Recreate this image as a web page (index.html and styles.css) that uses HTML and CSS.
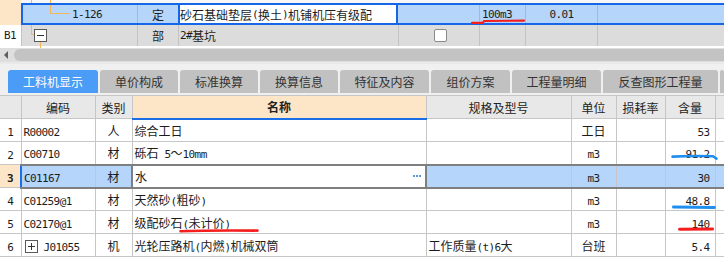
FILE: index.html
```html
<!DOCTYPE html>
<html lang="zh-CN">
<head>
<meta charset="utf-8">
<title>工料机显示</title>
<link rel="stylesheet" href="styles.css">
</head>
<body>
<div class="top">
  <div class="trow stub">
    <div class="c c-idx beige"></div>
    <div class="c stub-rest"><i class="tl s-v1"></i><i class="tl s-v2"></i></div>
  </div>
  <div class="trow r1">
    <div class="c r1-idx beige"></div>
    <div class="selbox">
      <div class="c t1-code"><i class="tl r1-v"></i><i class="tl r1-h"></i><span class="a">1-126</span></div>
      <div class="c t1-type">定</div>
      <div class="c t1-name">砂石基础垫层<span class="a">(</span>换土<span class="a">)</span>机铺机压有级配</div>
      <div class="c t1-c4"></div>
      <div class="c t1-c5"><span class="a">100m3</span>
        <svg class="mark m-top" width="56" height="7" viewBox="0 0 56 7"><path d="M1 4.8 L12 4.8 L13 3 L53 2.6" fill="none" stroke="#f51d1d" stroke-width="2.2" stroke-linecap="round" stroke-linejoin="round"/></svg>
      </div>
      <div class="c t1-c6"><span class="a">0.01</span></div>
      <div class="c t-rest"></div>
    </div>
  </div>
  <div class="trow r2">
    <div class="c t2-idx"><span class="a">B1</span></div>
    <div class="c t2-code"><i class="tl r2-v"></i><i class="tl r2-h"></i><i class="tl r2-v2"></i><span class="box minus"></span></div>
    <div class="c t2-type">部</div>
    <div class="c t2-name"><span class="a">2#</span>基坑</div>
    <div class="c t2-c4"><span class="check"></span></div>
    <div class="c t2-c5"></div>
    <div class="c t2-c6"></div>
    <div class="c t-rest"></div>
  </div>
</div>

<div class="hscroll">
  <span class="arrow"></span>
  <span class="thumb"></span>
</div>

<div class="tabbar">
  <div class="tab active w90">工料机显示</div>
  <div class="tab w78">单价构成</div>
  <div class="tab w78">标准换算</div>
  <div class="tab w78">换算信息</div>
  <div class="tab w89">特征及内容</div>
  <div class="tab w79">组价方案</div>
  <div class="tab w89">工程量明细</div>
  <div class="tab w115">反查图形工程量</div>
  <div class="tab wrest"></div>
</div>

<table class="grid">
  <colgroup>
    <col class="k0"><col class="k1"><col class="k2"><col class="k3"><col class="k4"><col class="k5"><col class="k6"><col class="k7"><col class="k8">
  </colgroup>
  <thead>
    <tr>
      <th></th>
      <th>编码</th>
      <th>类别</th>
      <th class="h-name">名称</th>
      <th>规格及型号</th>
      <th>单位</th>
      <th>损耗率</th>
      <th>含量</th>
      <th></th>
    </tr>
  </thead>
  <tbody>
    <tr>
      <td class="idx"><span class="a">1</span></td>
      <td><span class="a">R00002</span></td>
      <td class="ctr">人</td>
      <td>综合工日</td>
      <td></td>
      <td class="ctr">工日</td>
      <td></td>
      <td class="num"><span class="a">53</span></td>
      <td></td>
    </tr>
    <tr>
      <td class="idx"><span class="a">2</span></td>
      <td><span class="a">C00710</span></td>
      <td class="ctr">材</td>
      <td>砾石<span class="a"> 5</span>～<span class="a">10mm</span></td>
      <td></td>
      <td class="ctr"><span class="a">m3</span></td>
      <td></td>
      <td class="num"><span class="a">91.2</span>
        <svg class="mark m-blue1" width="48" height="8" viewBox="0 0 48 8"><path d="M1.5 2.6 Q20 1.6 42 2.2 L45.5 4.6" fill="none" stroke="#1e8ff0" stroke-width="2.6" stroke-linecap="round" stroke-linejoin="round"/></svg>
      </td>
      <td></td>
    </tr>
    <tr class="sel">
      <td class="idx"><span class="a">3</span></td>
      <td class="code"><span class="a">C01167</span></td>
      <td class="ctr">材</td>
      <td class="edit">水<span class="dots"><i></i><i></i><i></i></span></td>
      <td></td>
      <td class="ctr"><span class="a">m3</span></td>
      <td></td>
      <td class="num"><span class="a">30</span></td>
      <td></td>
    </tr>
    <tr>
      <td class="idx"><span class="a">4</span></td>
      <td><span class="a">C01259@1</span></td>
      <td class="ctr">材</td>
      <td>天然砂<span class="a">(</span>粗砂<span class="a">)</span></td>
      <td></td>
      <td class="ctr"><span class="a">m3</span></td>
      <td></td>
      <td class="num"><span class="a">48.8</span>
        <svg class="mark m-blue2" width="46" height="7" viewBox="0 0 46 7"><path d="M1.5 3 L42.5 3.4" fill="none" stroke="#1e8ff0" stroke-width="3" stroke-linecap="round"/></svg>
      </td>
      <td></td>
    </tr>
    <tr>
      <td class="idx"><span class="a">5</span></td>
      <td><span class="a">C02170@1</span></td>
      <td class="ctr">材</td>
      <td>级配砂石<span class="a">(</span>未计价<span class="a">)</span>
        <svg class="mark m-red2" width="82" height="6" viewBox="0 0 82 6"><path d="M1.5 3.2 Q30 2.2 78.5 2.6" fill="none" stroke="#f51d1d" stroke-width="2.6" stroke-linecap="round"/></svg>
      </td>
      <td></td>
      <td class="ctr"><span class="a">m3</span></td>
      <td></td>
      <td class="num"><span class="a">140</span>
        <svg class="mark m-red1" width="38" height="7" viewBox="0 0 38 7"><path d="M1.5 3.2 L34.5 3" fill="none" stroke="#f51d1d" stroke-width="3" stroke-linecap="round"/></svg>
      </td>
      <td></td>
    </tr>
    <tr>
      <td class="idx"><span class="a">6</span></td>
      <td><span class="box plus"></span><span class="a">J01055</span></td>
      <td class="ctr">机</td>
      <td>光轮压路机<span class="a">(</span>内燃<span class="a">)</span>机械双筒</td>
      <td>工作质量<span class="a">(t)6</span>大</td>
      <td class="ctr">台班</td>
      <td></td>
      <td class="num"><span class="a">5.4</span></td>
      <td></td>
    </tr>
  </tbody>
</table>
</body>
</html>
```
FILE: styles.css
```css
* {
  box-sizing: border-box;
  margin: 0;
  padding: 0;
}

html, body {
  background: #ffffff;
}

body {
  margin: 0;
  width: 724px;
  overflow: hidden;
  font-family: "Noto Sans CJK SC", "Noto Sans", sans-serif;
  font-size: 12px;
  color: #1c1c1c;
}

.a {
  font-family: "DejaVu Sans Mono", "Liberation Mono", monospace;
  font-size: 11px;
  letter-spacing: -0.6px;
}

/* ---------- top grid ---------- */
.trow {
  display: flex;
}

.c {
  position: relative;
  flex: none;
  display: flex;
  align-items: center;
  white-space: nowrap;
}

.beige {
  background: #fde5c7;
}

.stub {
  height: 3px;
}

.stub .c-idx {
  width: 21px;
}

.stub-rest {
  flex: 1;
  background: #f7f7f7;
}

.tl {
  position: absolute;
  display: block;
  background: #f6b65c;
}

.s-v1 { left: 10px; top: 0; width: 1px; height: 3px; }
.s-v2 { left: 29px; top: 0; width: 1px; height: 3px; }

.r1 {
  height: 22px;
}

.r1-idx {
  width: 21px;
}

.selbox {
  flex: 1;
  display: flex;
  height: 22px;
  border: 2px solid #1566e8;
  border-right: none;
  background: #b5d5fb;
}

.selbox .c {
  height: 18px;
}

.t1-code {
  width: 115px;
  border-right: 1px solid #a9b9cc;
  padding-left: 49px;
}

.r1-v { left: 27px; top: 0; width: 1px; height: 9px; }
.r1-h { left: 27px; top: 8px; width: 20px; height: 1px; }

.t1-type {
  width: 40px;
  justify-content: center;
}

.t1-name {
  width: 220px;
  background: #ffffff;
  border-left: 2px solid #1566e8;
  border-right: 2px solid #1566e8;
  padding-left: 0;
}

.t1-c4 {
  width: 82px;
  border-right: 1px solid #a9b9cc;
}

.t1-c5 {
  width: 46px;
  border-right: 1px solid #a9b9cc;
  padding-left: 2px;
}

.t1-c6 {
  width: 72px;
  border-right: 1px solid #a9b9cc;
  justify-content: center;
}

.t-rest {
  flex: 1;
}

.mark {
  position: absolute;
  display: block;
  overflow: visible;
}

.m-top {
  left: -9px;
  top: 13px;
}

.r2 {
  height: 21px;
  background: #dcdcdc;
}

.r2 .c {
  height: 21px;
  border-right: 1px solid #c3c3c3;
}

.t2-idx {
  width: 22px;
  background: #ffffff;
  padding-left: 4px;
}

.t2-code {
  width: 116px;
}

.r2-v { left: 9px; top: 0; width: 1px; height: 10px; }
.r2-h { left: 9px; top: 9px; width: 4px; height: 1px; }
.r2-v2 { left: 18px; top: 17px; width: 1px; height: 6px; }

.box {
  display: inline-block;
  position: relative;
  width: 13px;
  height: 13px;
  border: 1px solid #5a5a5a;
  background: #ffffff;
  flex: none;
}

.box::before {
  content: "";
  position: absolute;
  left: 2px;
  top: 5px;
  width: 7px;
  height: 1px;
  background: #333333;
}

.plus::after {
  content: "";
  position: absolute;
  left: 5px;
  top: 2px;
  width: 1px;
  height: 7px;
  background: #333333;
}

.t2-code .minus {
  margin-left: 12px;
  margin-top: -1px;
}

.t2-type {
  width: 41px;
  justify-content: center;
}

.t2-name {
  width: 220px;
  padding-left: 1px;
}

.t2-c4 {
  width: 81px;
  justify-content: center;
}

.check {
  display: block;
  width: 13px;
  height: 13px;
  border: 1px solid #8a8a8a;
  border-radius: 2px;
  background: #ffffff;
  margin-left: 2px;
}

.t2-c5 { width: 46px; }
.t2-c6 { width: 72px; }

.r2 .t-rest {
  border-right: none;
}

/* ---------- scrollbar ---------- */
.hscroll {
  display: flex;
  align-items: center;
  height: 18px;
  border-top: 2px solid #ffffff;
  border-bottom: 2px solid #e9e9e9;
  background: #dedede;
  padding-left: 4px;
}

.arrow {
  display: block;
  width: 0;
  height: 0;
  border-top: 4px solid transparent;
  border-bottom: 4px solid transparent;
  border-right: 4px solid #5f5f5f;
}

.thumb {
  display: block;
  flex: 1;
  height: 12px;
  margin-left: 6px;
  background: #c3c3c3;
  border-radius: 6px 0 0 6px;
}

/* ---------- tabs ---------- */
.tabbar {
  display: flex;
  gap: 2px;
  background: #f0f0f0;
  padding: 6px 0 2px 8px;
}

.tab {
  flex: none;
  height: 23px;
  display: flex;
  align-items: center;
  justify-content: center;
  background: #c1c1c1;
  color: #333333;
  border-radius: 3px 3px 0 0;
  font-size: 12px;
  white-space: nowrap;
}

.tab.active {
  background: #4a9cf6;
  color: #ffffff;
}

.w90 { width: 90px; }
.w78 { width: 78px; }
.w79 { width: 79px; }
.w89 { width: 89px; }
.w115 { width: 115px; }
.wrest { flex: 1; }

/* ---------- main grid ---------- */
.grid {
  border-collapse: collapse;
  table-layout: fixed;
  width: 724px;
}

.k0 { width: 21px; }
.k1 { width: 74px; }
.k2 { width: 37px; }
.k3 { width: 294px; }
.k4 { width: 145px; }
.k5 { width: 45px; }
.k6 { width: 49px; }
.k7 { width: 50px; }
.k8 { width: 9px; }

.grid th,
.grid td {
  position: relative;
  border: 1px solid #c6c6c6;
  padding: 0 2px;
  white-space: nowrap;
  text-align: left;
  vertical-align: middle;
  font-weight: normal;
}

.grid th:first-child,
.grid td:first-child {
  border-left: none;
}

.grid thead tr {
  height: 23px;
}

.grid th {
  background: #e8e8e8;
  text-align: center;
  color: #222222;
}

.grid th.h-name {
  background: #fde5c7;
  font-weight: bold;
  border-bottom: 2px solid #1a6fe8;
}

.grid tbody tr {
  height: 23px;
}

.grid td.idx {
  text-align: center;
  padding: 0;
}

.grid td.ctr {
  text-align: center;
}

.grid td.num {
  text-align: right;
  padding-right: 5px;
}

.grid tr.sel td {
  background: #b5d5fb;
  border-top: 2px solid #7f7f7f;
  border-bottom: 2px solid #7f7f7f;
}

.grid tr.sel td.idx {
  background: #fde5c7;
  font-weight: bold;
  border-top: 1px solid #c6c6c6;
  border-bottom: 1px solid #c6c6c6;
}

.grid tr.sel td.code {
  border-left: 2px solid #1a6fe8;
}

.grid tr.sel td.edit {
  background: #ffffff;
  border-left: 2px solid #7f7f7f;
  border-right: 2px solid #7f7f7f;
}

.dots {
  position: absolute;
  right: 4px;
  top: 9px;
  display: flex;
  gap: 1px;
}

.dots i {
  display: block;
  width: 2px;
  height: 2px;
  background: #5b9bd5;
}

.grid td .box.plus {
  margin: 0 6px 0 1px;
  vertical-align: -2px;
}

.m-blue1 { left: 5px; top: 12px; }
.m-blue2 { left: 6px; top: 15px; }
.m-red1 { left: 12px; top: 15px; }
.m-red2 { left: 46px; top: 17px; }
```
